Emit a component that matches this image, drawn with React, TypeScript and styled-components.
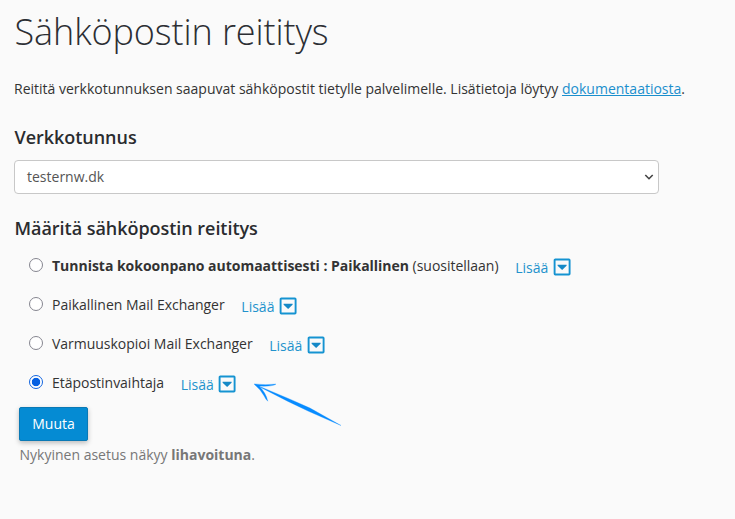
import React from "react";
import styled, { createGlobalStyle } from "styled-components";

const GlobalStyle = createGlobalStyle`
  * { box-sizing: border-box; }
  body { margin: 0; background: #fafafa; color: #333; font: 14px/20px "Open Sans", sans-serif; }
`;
const Page = styled.main`
  position: relative;
  height: 519px;
  padding: 10px 14px 0;
  background: #fafafa;
  overflow: hidden;
`;
const Title = styled.h1`
  margin: 0 0 0 0.5px;
  font-size: 36px;
  line-height: 44px;
  font-weight: 300;
  letter-spacing: -0.1px;
  color: #2c2e33;
`;
const Intro = styled.p`
  margin: 25px 0 0;
  white-space: nowrap;
`;
const DocLink = styled.a`
  color: #1a8fcd;
  text-decoration: underline;
`;
const Heading = styled.h2<{ $top: number }>`
  margin: ${(p) => p.$top}px 0 0 0.5px;
  font-size: 18px;
  line-height: 24px;
  font-weight: 600;
  letter-spacing: -0.04px;
  color: #2a2c2f;
`;
const SelectBox = styled.div`
  display: flex;
  align-items: center;
  justify-content: space-between;
  width: 645px;
  height: 34px;
  margin-top: 11px;
  padding: 0 4px 0 12px;
  border: 1px solid #c8c8c8;
  border-radius: 4px;
  background: #fff;
  color: #555;
`;
const Options = styled.div`
  margin-top: 5px;
`;
const Option = styled.label`
  display: flex;
  align-items: center;
  height: 39px;
  padding-left: 15px;
  white-space: nowrap;
`;
const Radio = styled.input`
  appearance: none;
  width: 14px;
  height: 14px;
  margin: 0 9px 0 0;
  border: 1px solid #85858f;
  border-radius: 50%;
  background: #fff;
  &:checked {
    border-color: #1265df;
    background: radial-gradient(circle, #0560e2 3.8px, #fff 4.6px);
  }
`;
const Label = styled.span`
  margin-top: 2px;
  letter-spacing: -0.02px;
`;
const More = styled.span`
  display: flex;
  align-items: center;
  gap: 4.5px;
  margin: 6px 0 0 16.7px;
  color: #2292cc;
`;
const Toggle = styled.svg`
  display: block;
  margin-top: -2px;
`;
const Button = styled.button`
  display: block;
  width: 69px;
  height: 34px;
  margin: 6px 0 0 5px;
  padding: 0;
  border: 1px solid #0a79b5;
  border-radius: 2px;
  background: #058bd3;
  box-shadow: 0 2px 5px rgba(0, 0, 0, 0.25);
  color: #fff;
  font: inherit;
`;
const Note = styled.p`
  margin: 4px 0 0 5.5px;
  color: #777;
`;
const Pointer = styled.svg`
  position: absolute;
  left: 250px;
  top: 378px;
  pointer-events: none;
`;

const OPTIONS: { id: string; label: React.ReactNode }[] = [
  { id: "auto", label: <><b>Tunnista kokoonpano automaattisesti : Paikallinen</b> (suositellaan)</> },
  { id: "local", label: "Paikallinen Mail Exchanger" },
  { id: "backup", label: "Varmuuskopioi Mail Exchanger" },
  { id: "remote", label: "Etäpostinvaihtaja" },
];

export default function App() {
  return (
    <Page>
      <GlobalStyle />
      <Title>Sähköpostin reititys</Title>
      <Intro>
        Reititä verkkotunnuksen saapuvat sähköpostit tietylle palvelimelle. Lisätietoja löytyy{" "}
        <DocLink href="#">dokumentaatiosta</DocLink>.
      </Intro>
      <Heading $top={26}>Verkkotunnus</Heading>
      <SelectBox>
        testernw.dk
        <svg width="10" height="8" viewBox="0 0 10 8">
          <path d="M1.3 2 5 5.7 8.7 2" fill="none" stroke="#444" strokeWidth="1.6" />
        </svg>
      </SelectBox>
      <Heading $top={22}>Määritä sähköpostin reititys</Heading>
      <Options>
        {OPTIONS.map(({ id, label }) => (
          <Option key={id}>
            <Radio type="radio" name="routing" defaultChecked={id === "remote"} />
            <Label>{label}</Label>
            <More>
              Lisää
              <Toggle width="18" height="18" viewBox="0 0 18 18">
                <rect x="1.6" y="1.5" width="15" height="15" rx="0.7" fill="none" stroke="#1593d1" strokeWidth="1.9" />
                <path d="M4.6 6.7h9v1L9.1 11.9 4.6 7.7z" fill="#1589c7" />
              </Toggle>
            </More>
          </Option>
        ))}
      </Options>
      <Button>Muuta</Button>
      <Note>
        Nykyinen asetus näkyy <b>lihavoituna</b>.
      </Note>
      <Pointer width="94" height="50" viewBox="0 0 94 50">
        <path d="M4 5.9Q15 7.3 26 6.1 23 8.7 9 8.1Q15.8 14.5 17.8 23.2 15.7 21.5 14 17.8 10.7 11.5 4 5.9z" fill="#078bff" stroke="#078bff" strokeWidth="0.3" />
        <path d="M5 6.5 40 21.2 60 30.1 91 47.5 58 33 38 23.4z" fill="#078bff" stroke="#078bff" strokeWidth="0.3" />
      </Pointer>
    </Page>
  );
}
